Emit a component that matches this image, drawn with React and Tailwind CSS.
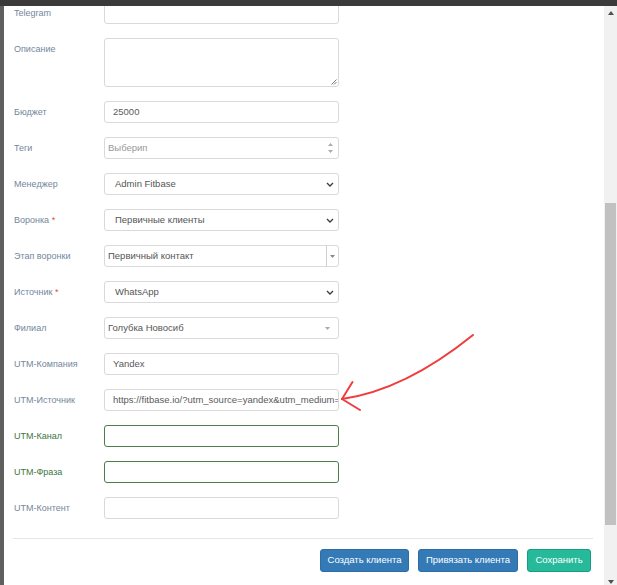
const font = { fontFamily: '"Liberation Sans", Arial, sans-serif' };

const Chevron = () => (
  <svg width="8" height="5" viewBox="0 0 8 5" className="shrink-0">
    <path d="M1 1 L4 4 L7 1" fill="none" stroke="#3a3a3a" strokeWidth="1.3" />
  </svg>
);

const Caret = ({ color = '#999' }) => (
  <svg width="5" height="3" viewBox="0 0 5 3" className="shrink-0">
    <path d="M0 0 L5 0 L2.5 3 Z" fill={color} />
  </svg>
);

const Label = ({ children, required, green }) => (
  <div
    className={`w-[90px] shrink-0 text-[9px] leading-[22px] ${green ? 'text-[#3c763d]' : 'text-[#73879c]'}`}
  >
    {children}
    {required && <span className="text-[#e04b4b]"> *</span>}
  </div>
);

const Row = ({ label, required, green, children }) => (
  <div className="flex items-start mb-[14px]">
    <Label required={required} green={green}>
      {label}
    </Label>
    {children}
  </div>
);

const Input = ({ value, green }) => (
  <div
    className={`w-[235px] h-[22px] rounded-[3px] bg-white flex items-center pl-[8px] text-[9.5px] text-[#5a5a5a] overflow-hidden whitespace-nowrap ${
      green ? 'border border-[#4b7d4b]' : 'border border-[#d9d9d9]'
    }`}
  >
    {value}
  </div>
);

const Select = ({ value }) => (
  <div className="w-[235px] h-[22px] rounded-[3px] border border-[#d9d9d9] bg-white flex items-center justify-between pl-[10px] pr-[4px] text-[9.5px] text-[#555]">
    <span>{value}</span>
    <Chevron />
  </div>
);

export default function App() {
  return (
    <div className="w-[617px] h-[585px] relative overflow-hidden bg-white" style={font}>
      <div className="h-[6px] bg-[#3a3a3a]" />
      <div className="flex h-[579px]">
        <div className="w-[4px] bg-[#5f5f5f] shrink-0" />

        <div className="flex-1 flex flex-col overflow-hidden">
          <div className="-mt-[4px] pl-[10px]">
            <Row label="Telegram">
              <Input value="" />
            </Row>

            <Row label="Описание">
              <div className="w-[235px] h-[49px] rounded-[3px] border border-[#d9d9d9] bg-white relative">
                <svg width="6" height="6" viewBox="0 0 6 6" className="absolute right-[1px] bottom-[1px]">
                  <path d="M5.5 0.5 L0.5 5.5 M5.5 3 L3 5.5" stroke="#555" strokeWidth="0.8" />
                </svg>
              </div>
            </Row>

            <Row label="Бюджет">
              <Input value="25000" />
            </Row>

            <Row label="Теги">
              <div className="w-[235px] h-[22px] rounded-[3px] border border-[#d9d9d9] bg-white flex items-center justify-between pl-[3px] pr-[3px] text-[9.5px] text-[#999]">
                <span>Выберип</span>
                <div className="flex flex-col items-center gap-[4px] w-[9px]">
                  <svg width="5" height="3" viewBox="0 0 5 3">
                    <path d="M0 3 L5 3 L2.5 0 Z" fill="#aaa" />
                  </svg>
                  <Caret color="#aaa" />
                </div>
              </div>
            </Row>

            <Row label="Менеджер">
              <Select value="Admin Fitbase" />
            </Row>

            <Row label="Воронка" required>
              <Select value="Первичные клиенты" />
            </Row>

            <Row label="Этап воронки">
              <div className="w-[235px] h-[22px] rounded-[3px] border border-[#d9d9d9] bg-white flex items-center text-[9.5px] text-[#555]">
                <span className="flex-1 pl-[3px]">Первичный контакт</span>
                <div className="w-[12px] h-full border-l border-[#cfcfcf] flex items-center justify-center">
                  <Caret color="#888" />
                </div>
              </div>
            </Row>

            <Row label="Источник" required>
              <Select value="WhatsApp" />
            </Row>

            <Row label="Филиал">
              <div className="w-[235px] h-[22px] rounded-[3px] border border-[#d9d9d9] bg-white flex items-center justify-between pl-[3px] pr-[8px] text-[9.5px] text-[#555]">
                <span>Голубка Новосиб</span>
                <Caret color="#aaa" />
              </div>
            </Row>

            <Row label="UTM-Компания">
              <Input value="Yandex" />
            </Row>

            <Row label="UTM-Источник">
              <Input value="https://fitbase.io/?utm_source=yandex&utm_medium=cpc" />
            </Row>

            <Row label="UTM-Канал" green>
              <Input value="" green />
            </Row>

            <Row label="UTM-Фраза" green>
              <Input value="" green />
            </Row>

            <Row label="UTM-Контент">
              <Input value="" />
            </Row>
          </div>

          <div className="mt-[5px] ml-[9px] mr-[11px] border-t border-[#e5e5e5]" />

          <div className="flex justify-end gap-[9px] pt-[10px] pr-[13px]">
            <button className="w-[89px] h-[23px] rounded-[3px] bg-[#337ab7] border border-[#2e6da4] text-white text-[9.5px]">
              Создать клиента
            </button>
            <button className="w-[100px] h-[23px] rounded-[3px] bg-[#337ab7] border border-[#2e6da4] text-white text-[9.5px]">
              Привязать клиента
            </button>
            <button className="w-[64px] h-[23px] rounded-[3px] bg-[#26b99a] border border-[#169f85] text-white text-[9.5px]">
              Сохранить
            </button>
          </div>
        </div>

        <div className="w-[13px] shrink-0 bg-[#f1f1f1] flex flex-col items-center">
          <div className="h-[14px] flex items-center justify-center">
            <svg width="6" height="4" viewBox="0 0 6 4">
              <path d="M0 4 L6 4 L3 0 Z" fill="#505050" />
            </svg>
          </div>
          <div className="mt-[183px] w-[11px] h-[322px] bg-[#c1c1c1]" />
          <div className="flex-1 flex items-end justify-center pb-[1px]">
            <svg width="6" height="4" viewBox="0 0 6 4">
              <path d="M0 0 L6 0 L3 4 Z" fill="#505050" />
            </svg>
          </div>
        </div>
      </div>

      <svg
        className="absolute inset-0 pointer-events-none"
        width="617"
        height="585"
        viewBox="0 0 617 585"
      >
        <path
          d="M473 335 Q405 390 342 399"
          fill="none"
          stroke="#f03c3c"
          strokeWidth="2"
          strokeLinecap="round"
        />
        <path
          d="M352.5 382 L342 399 L360 410"
          fill="none"
          stroke="#f03c3c"
          strokeWidth="2"
          strokeLinecap="round"
          strokeLinejoin="round"
        />
      </svg>
    </div>
  );
}
